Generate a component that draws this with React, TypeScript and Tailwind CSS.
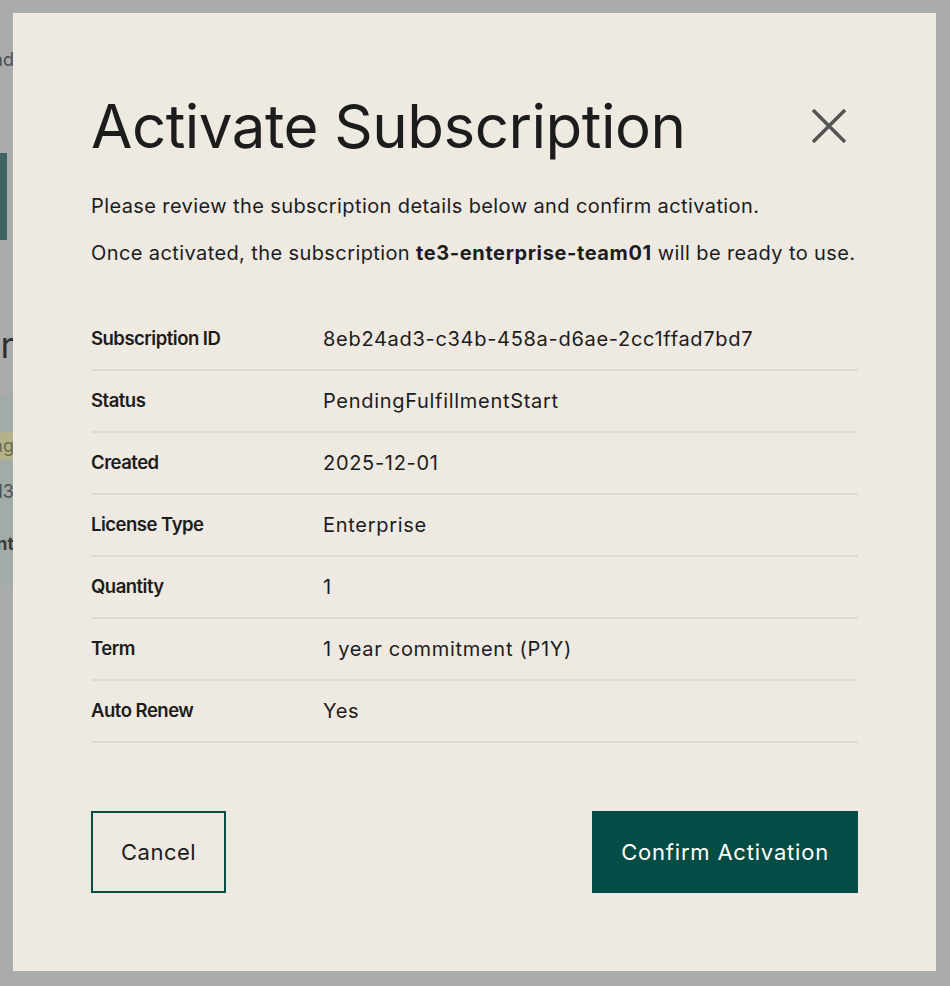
interface DetailRow {
  label: string
  value: string
}

const DETAILS: DetailRow[] = [
  { label: 'Subscription ID', value: '8eb24ad3-c34b-458a-d6ae-2cc1ffad7bd7' },
  { label: 'Status', value: 'PendingFulfillmentStart' },
  { label: 'Created', value: '2025-12-01' },
  { label: 'License Type', value: 'Enterprise' },
  { label: 'Quantity', value: '1' },
  { label: 'Term', value: '1 year commitment (P1Y)' },
  { label: 'Auto Renew', value: 'Yes' },
]

function ClippedText({ text, className }: { text: string; className: string }) {
  // page text that runs under the modal; only its tail shows on the left
  return (
    <div className={`flex justify-end overflow-hidden whitespace-nowrap w-[14px] ${className}`}>
      <span>{text}</span>
    </div>
  )
}

function BackgroundPage() {
  return (
    <div className="flex flex-col min-h-screen bg-[#aaabad] font-['Inter',sans-serif]">
      <ClippedText text="Subscriptions and" className="mt-[48px] text-[18px] leading-[24px] text-[#4d4e50]" />
      <div className="mt-[81px] w-[7px] h-[87px] bg-[#3d6462]" />
      <ClippedText text="Your" className="mt-[83px] text-[36px] leading-[44px] text-[#2f3032]" />
      <div className="mt-[28px] w-[20px] bg-[#a2aba8] pt-[37px] pb-[27px] flex flex-col">
        <ClippedText text="Pending" className="w-[14px] bg-[#b4b28b] h-[28px] leading-[28px] text-[18px] text-[#6c6a4c]" />
        <ClippedText text="8eb24ad3" className="mt-[18px] text-[18px] leading-[28px] text-[#4d4e50]" />
        <ClippedText text="Enterprise Parent" className="mt-[24px] text-[18px] leading-[28px] font-bold text-[#3a3b3d]" />
      </div>
    </div>
  )
}

function CloseIcon() {
  return (
    <svg width="34" height="34" viewBox="0 0 34 34" fill="none" stroke="currentColor" strokeWidth="3.5">
      <path d="M1 1L33 33M33 1L1 33" />
    </svg>
  )
}

export default function App() {
  return (
    <div className="relative">
      <BackgroundPage />

      <div className="absolute inset-0 flex items-start pl-[13px] pt-[13px]">
        <div className="w-[923px] bg-[#eee9e1] px-[78px] pt-[77px] pb-[78px] text-[#1c1c1c] font-['Inter',sans-serif]">
          <div className="flex items-center justify-between">
            <h2 className="text-[60px] leading-[72px] font-normal tracking-[-0.5px]">Activate Subscription</h2>
            <button className="text-[#555555] mr-[12px]">
              <CloseIcon />
            </button>
          </div>

          <p className="mt-[30px] text-[20px] leading-[28px] tracking-[0.4px]">
            Please review the subscription details below and confirm activation.
          </p>
          <p className="mt-[19px] text-[20px] leading-[28px] tracking-[0.4px]">
            Once activated, the subscription <span className="font-bold tracking-[0.6px]">te3-enterprise-team01</span> will be ready to use.
          </p>

          <div className="mt-[42px] flex flex-col">
            {DETAILS.map((row) => (
              <div key={row.label} className="flex items-center h-[62px] border-b-2 border-[#dedad4]">
                <div className="w-[232px] text-[18.5px] font-semibold tracking-[-0.5px]">{row.label}</div>
                <div className="text-[20px] tracking-[0.7px]">{row.value}</div>
              </div>
            ))}
          </div>

          <div className="mt-[68px] flex items-center justify-between">
            <button className="h-[82px] px-[28px] border-2 border-[#0a4c47] text-[22px] tracking-[0.5px] text-[#1c1c1c]">
              Cancel
            </button>
            <button className="h-[82px] px-[29px] bg-[#044c46] text-[22px] tracking-[0.8px] text-white">
              Confirm Activation
            </button>
          </div>
        </div>
      </div>
    </div>
  )
}
